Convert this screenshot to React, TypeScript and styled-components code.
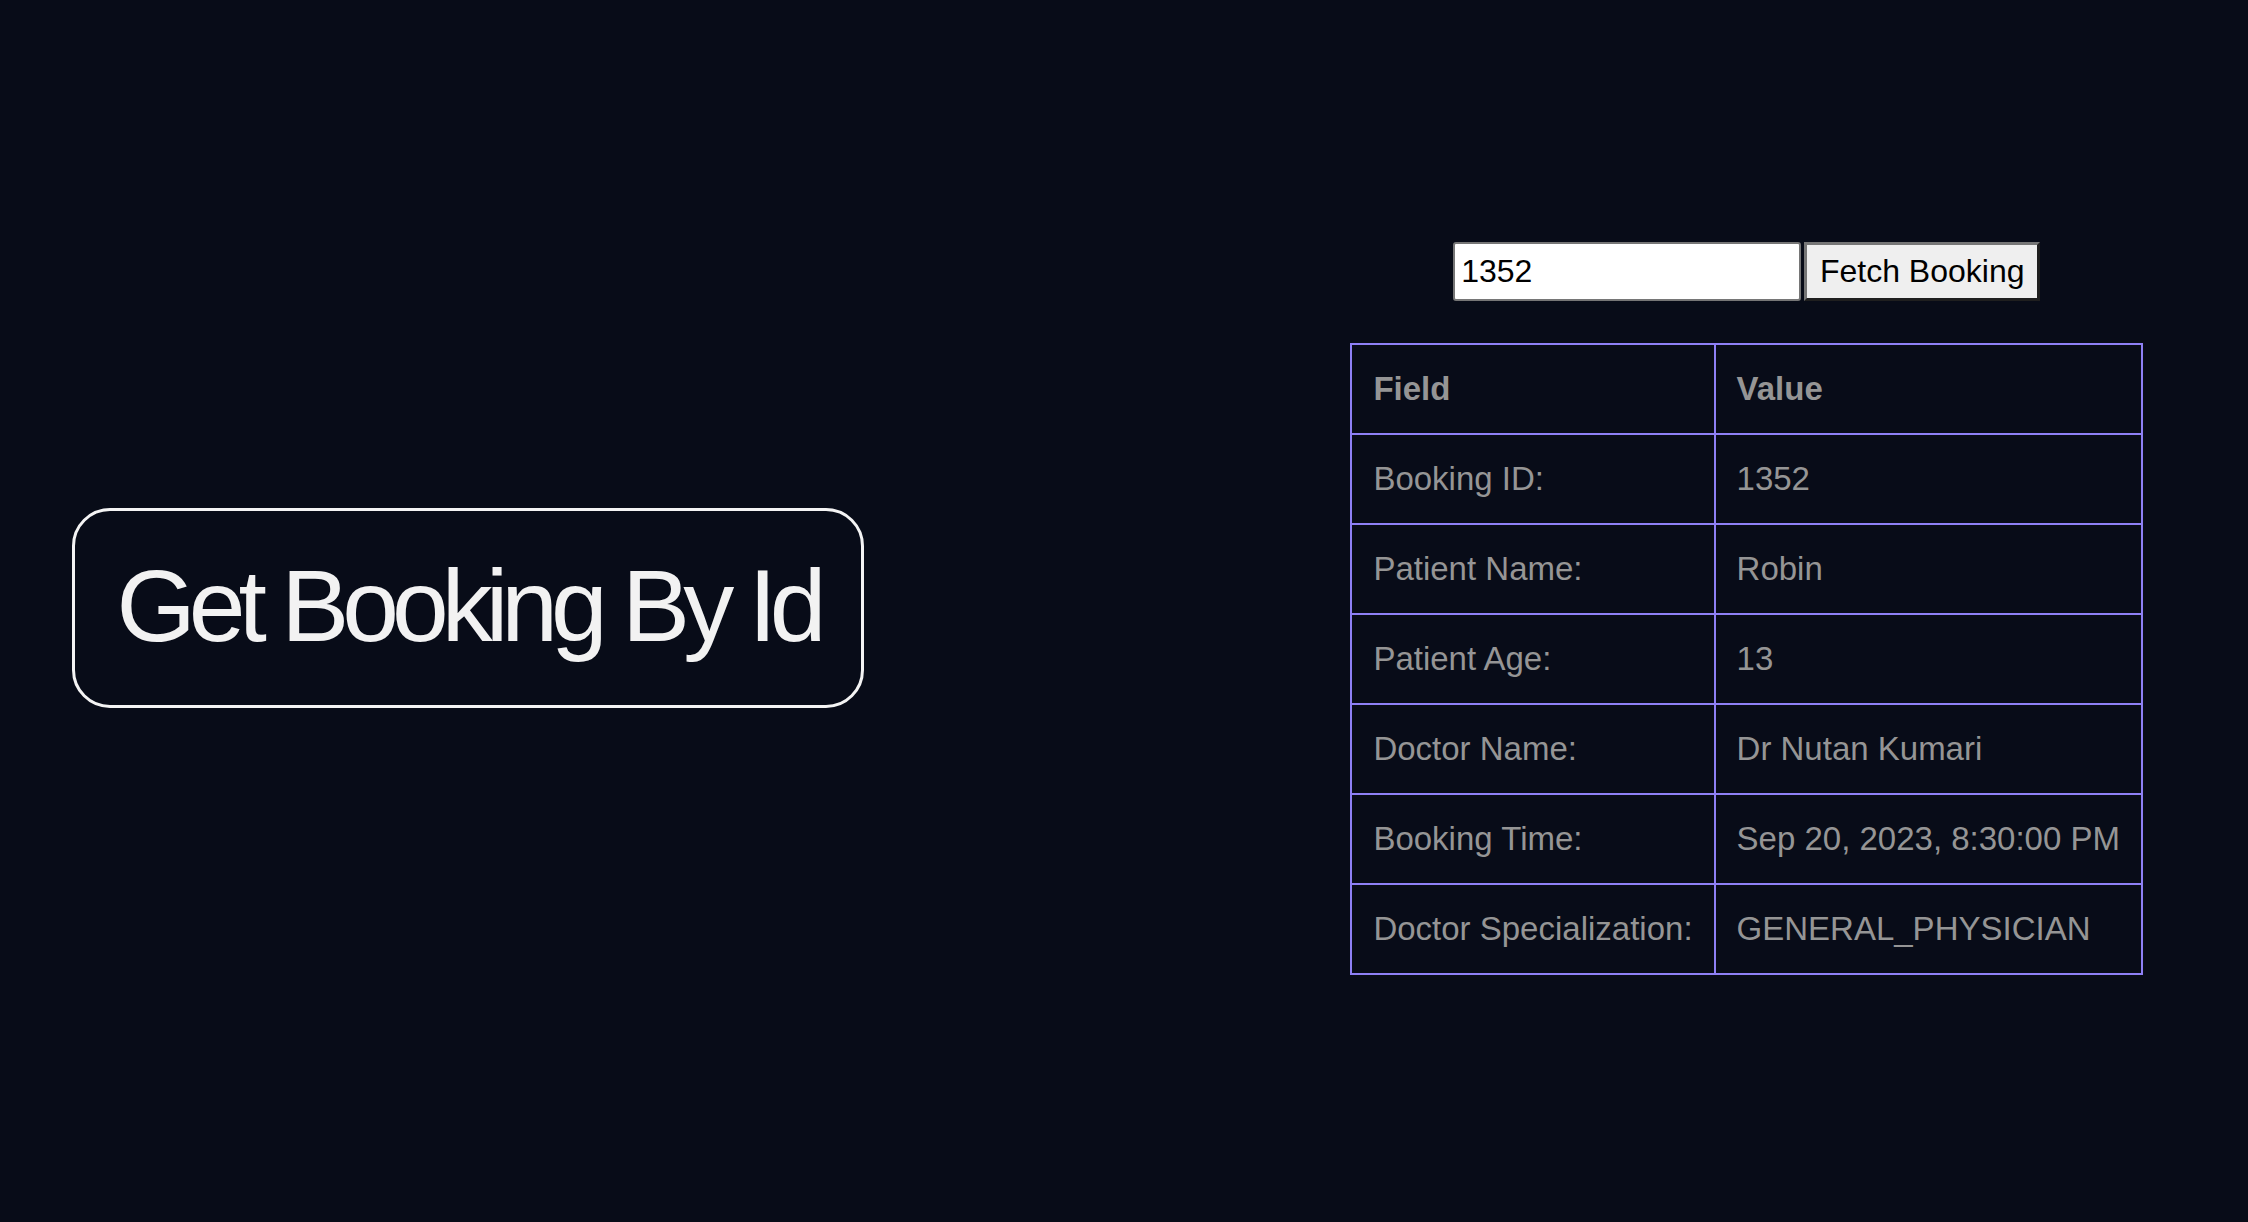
import React, { useState } from "react";
import styled, { createGlobalStyle } from "styled-components";

const GlobalStyle = createGlobalStyle`
  html, body {
    margin: 0;
    padding: 0;
    background: #080c18;
  }
  body {
    font-family: "Liberation Sans", Arial, Helvetica, sans-serif;
    color: #f2f2f2;
  }
`;

const Page = styled.main`
  box-sizing: border-box;
  height: 1216px;
  display: flex;
  align-items: center;
  justify-content: space-between;
  padding: 0 105px 0 72px;
`;

const TitleBox = styled.h1`
  box-sizing: border-box;
  margin: 0;
  width: 792px;
  height: 200px;
  display: flex;
  align-items: center;
  justify-content: center;
  border: 3px solid #f4f4f4;
  border-radius: 38px;
  font-size: 102px;
  font-weight: 400;
  letter-spacing: -7px;
  line-height: 1;
  color: #f2f2f2;
  padding: 0 0 4px 0;
  white-space: nowrap;
`;

const Column = styled.section`
  display: flex;
  flex-direction: column;
  align-items: center;
  gap: 42px;
`;

const SearchBar = styled.form`
  display: flex;
  align-items: stretch;
  gap: 3px;
  margin: 0;
`;

const IdInput = styled.input`
  box-sizing: border-box;
  width: 348px;
  height: 59px;
  border: 2px solid #767676;
  border-radius: 3px;
  background: #ffffff;
  color: #000000;
  font-family: "Liberation Sans", Arial, sans-serif;
  font-size: 32px;
  padding: 0 6px;
  outline: none;
`;

const FetchButton = styled.button`
  box-sizing: border-box;
  width: 236px;
  height: 59px;
  background: #efefef;
  color: #000000;
  font-family: "Liberation Sans", Arial, sans-serif;
  font-size: 32px;
  padding: 0 10px;
  border-style: solid;
  border-width: 3px;
  border-color: #767676 #1f1f1f #1f1f1f #767676;
  cursor: pointer;
  white-space: nowrap;
`;

const Table = styled.table`
  border-collapse: collapse;
  font-family: "Liberation Sans", Arial, sans-serif;
  font-size: 33px;
  color: #959595;
`;

const Cell = styled.td<{ $head?: boolean }>`
  box-sizing: border-box;
  height: 90px;
  padding: 0 21px;
  border: 2px solid #8e80f5;
  text-align: left;
  white-space: nowrap;
  font-weight: ${(p) => (p.$head ? 700 : 400)};
`;

const rows: [string, string][] = [
  ["Booking ID:", "1352"],
  ["Patient Name:", "Robin"],
  ["Patient Age:", "13"],
  ["Doctor Name:", "Dr Nutan Kumari"],
  ["Booking Time:", "Sep 20, 2023, 8:30:00 PM"],
  ["Doctor Specialization:", "GENERAL_PHYSICIAN"],
];

export default function App() {
  const [id, setId] = useState("1352");
  return (
    <>
      <GlobalStyle />
      <Page>
        <TitleBox>Get Booking By Id</TitleBox>
        <Column>
          <SearchBar onSubmit={(e) => e.preventDefault()}>
            <IdInput value={id} onChange={(e) => setId(e.target.value)} />
            <FetchButton type="submit">Fetch Booking</FetchButton>
          </SearchBar>
          <Table>
            <thead>
              <tr>
                <Cell as="th" $head>
                  Field
                </Cell>
                <Cell as="th" $head>
                  Value
                </Cell>
              </tr>
            </thead>
            <tbody>
              {rows.map(([k, v]) => (
                <tr key={k}>
                  <Cell>{k}</Cell>
                  <Cell>{v}</Cell>
                </tr>
              ))}
            </tbody>
          </Table>
        </Column>
      </Page>
    </>
  );
}
